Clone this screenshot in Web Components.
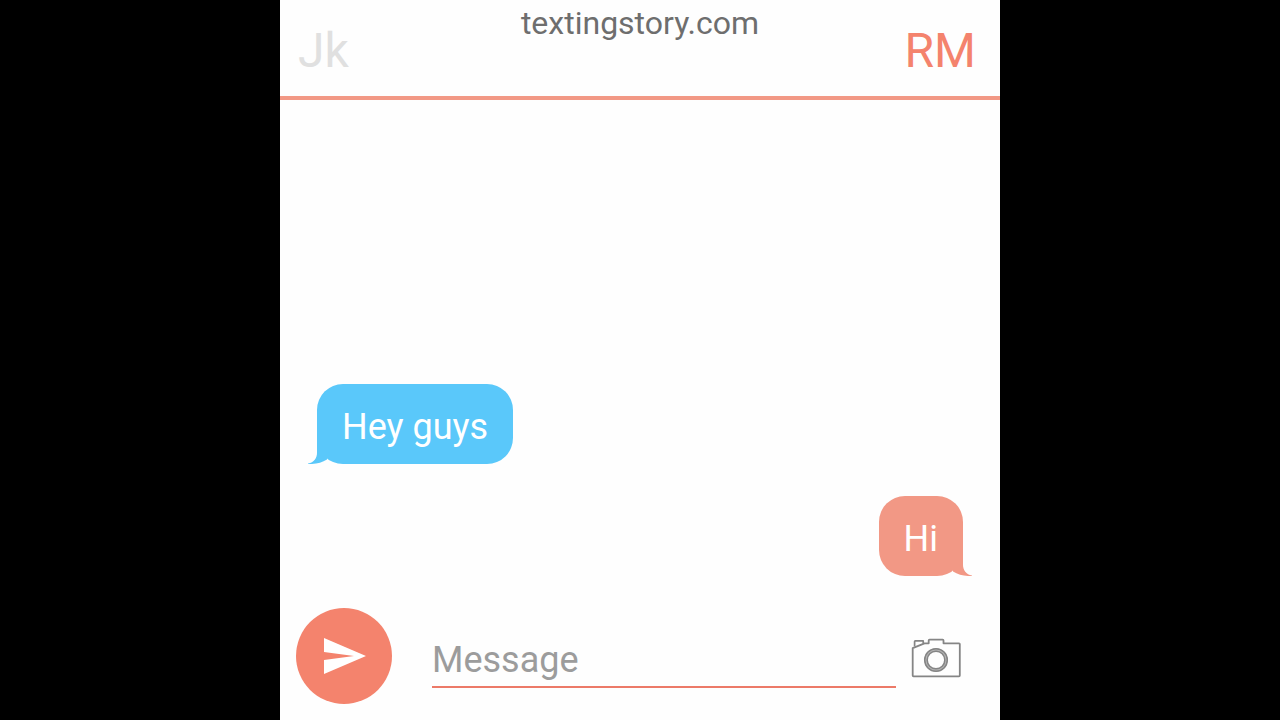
<!DOCTYPE html>
<html lang="en">
<head>
<meta charset="utf-8">
<meta name="viewport" content="width=device-width, initial-scale=1">
<title>textingstory.com</title>
<style>
  html, body { height: 100%; margin: 0; background: #000; }
  body {
    font-family: Roboto, "Noto Sans", sans-serif;
    --coral: #f4836d;
    --coral-soft: #f29885;
    --blue: #5ac8fa;
  }
</style>
</head>
<body>
<chat-screen>
  <chat-header slot="header" left="Jk" right="RM">textingstory.com</chat-header>
  <chat-bubble side="left">Hey guys</chat-bubble>
  <chat-bubble side="right">Hi</chat-bubble>
  <chat-composer slot="composer" placeholder="Message"></chat-composer>
</chat-screen>

<script>
  class ChatScreen extends HTMLElement {
    constructor() {
      super();
      this.attachShadow({ mode: 'open' }).innerHTML = `
        <style>
          :host {
            display: grid;
            grid-template-rows: auto 1fr auto;
            width: 56.25%;
            min-height: 100vh;
            margin: 0 auto;
            background: #fefefe;
          }
          main {
            display: flex;
            flex-direction: column;
            justify-content: flex-end;
            gap: 32px;
            padding: 32px 37px;
          }
        </style>
        <slot name="header"></slot>
        <main><slot></slot></main>
        <slot name="composer"></slot>`;
    }
  }

  class ChatHeader extends HTMLElement {
    constructor() {
      super();
      this.attachShadow({ mode: 'open' }).innerHTML = `
        <style>
          :host { display: block; }
          header {
            box-sizing: border-box;
            display: grid;
            grid-template-columns: 1fr auto 1fr;
            align-items: center;
            min-height: 100px;
            padding: 4px 18px 0;
            border-bottom: 4px solid var(--coral-soft);
          }
          button {
            padding: 2px 0 0;
            border: 0;
            background: none;
            font: 48px/56px Roboto, sans-serif;
            color: #e0e0e0;
            cursor: pointer;
          }
          .left { justify-self: start; }
          .right { justify-self: end; padding-right: 6px; color: var(--coral); }
          h1 {
            align-self: start;
            margin: 0;
            font-size: 32px;
            line-height: 38px;
            font-weight: 400;
            color: #6e6e6e;
          }
        </style>
        <header>
          <button class="left" type="button"></button>
          <h1><slot></slot></h1>
          <button class="right" type="button"></button>
        </header>`;
    }
    connectedCallback() {
      this.shadowRoot.querySelector('.left').textContent = this.getAttribute('left');
      this.shadowRoot.querySelector('.right').textContent = this.getAttribute('right');
    }
  }

  class ChatBubble extends HTMLElement {
    constructor() {
      super();
      this.attachShadow({ mode: 'open' }).innerHTML = `
        <style>
          :host {
            position: relative;
            box-sizing: border-box;
            align-self: flex-start;
            padding: 22px 25px 16px;
            border-radius: 26px;
            background: var(--fill);
            color: #fff;
            font-size: 36px;
            line-height: 42px;
            --fill: var(--blue);
          }
          :host([side="right"]) { align-self: flex-end; --fill: var(--coral-soft); }
          svg {
            position: absolute;
            bottom: 0;
            left: -9px;
            width: 20px;
            height: 26px;
            fill: var(--fill);
          }
          :host([side="right"]) svg { left: auto; right: -9px; transform: scaleX(-1); }
        </style>
        <slot></slot>
        <svg viewBox="0 0 20 26" aria-hidden="true"><path d="M9 0V15C9 20 6 24.5 0 25.5V26Q11 26.5 19 21.5V0Z"/></svg>`;
    }
  }

  class ChatComposer extends HTMLElement {
    constructor() {
      super();
      this.attachShadow({ mode: 'open' }).innerHTML = `
        <style>
          :host { display: block; }
          form {
            display: flex;
            align-items: flex-end;
            margin: 0;
            padding: 0 39px 16px 16px;
          }
          button {
            display: grid;
            place-items: center;
            flex: none;
            padding: 0;
            border: 0;
            background: none;
            cursor: pointer;
          }
          .send {
            width: 96px;
            height: 96px;
            margin-right: 40px;
            border-radius: 50%;
            background: var(--coral);
          }
          .camera { width: 50px; height: 60px; margin: 0 0 16px 15px; }
          svg { display: block; }
          input {
            flex: 1;
            min-width: 0;
            box-sizing: border-box;
            height: 50px;
            margin: 0 0 16px;
            padding: 0 0 4px;
            border: 0;
            border-bottom: 2px solid #ec7a68;
            border-radius: 0;
            outline: 0;
            background: none;
            font: 36px/42px Roboto, sans-serif;
            color: #444;
          }
          input::placeholder { color: #9c9c9c; opacity: 1; }
        </style>
        <form>
          <button class="send" type="button" aria-label="Send">
            <svg width="96" height="96" viewBox="0 0 96 96" fill="#fff"><path d="M28 30L70 48L28 66V52L58 48L28 44Z"/></svg>
          </button>
          <input type="text" aria-label="Message">
          <button class="camera" type="button" aria-label="Camera">
            <svg width="50" height="40" viewBox="0 0 50 40" fill="none" stroke="#858585" stroke-width="1.8" stroke-linejoin="round">
              <path d="M1.7 10.2V37.6Q1.7 38.4 2.5 38.4H48Q48.8 38.4 48.8 37.6V6.1Q48.8 5.3 48 5.3H32.5V2.5Q32.5 1.7 31.7 1.7H18.5Q17.7 1.7 17.7 2.5V5.3H13.5Z"/>
              <path d="M3.6 8.5V3.6Q3.6 2.9 4.3 2.9H12.2V5.2" stroke-width="1.7"/>
              <circle cx="25" cy="22" r="10.2" stroke="#b4b4b4" stroke-width="3"/>
              <circle cx="25" cy="22" r="11.3" stroke-width="1.5"/>
              <circle cx="25" cy="22" r="8.8" stroke-width="1.5"/>
            </svg>
          </button>
        </form>`;
    }
    connectedCallback() {
      this.shadowRoot.querySelector('input').placeholder = this.getAttribute('placeholder');
    }
  }

  customElements.define('chat-screen', ChatScreen);
  customElements.define('chat-header', ChatHeader);
  customElements.define('chat-bubble', ChatBubble);
  customElements.define('chat-composer', ChatComposer);
</script>
</body>
</html>
